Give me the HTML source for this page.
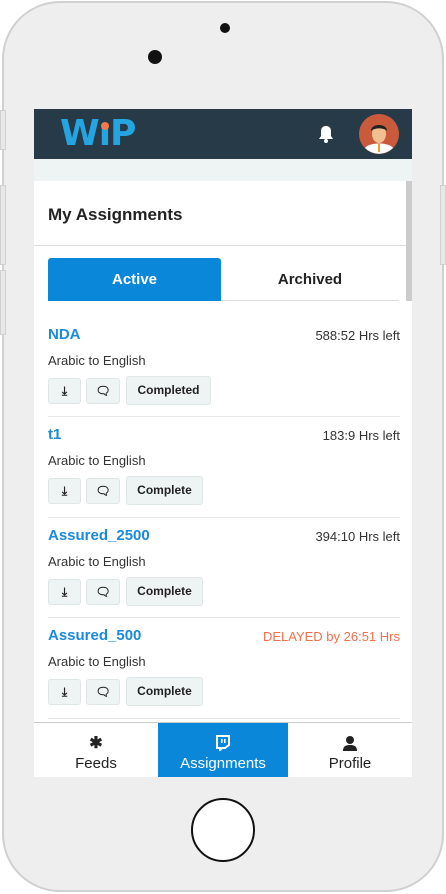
<!DOCTYPE html>
<html><head><style>
*{margin:0;padding:0;box-sizing:border-box}
body{width:446px;height:894px;background:#fff;font-family:"Liberation Sans",sans-serif;position:relative;overflow:hidden}
.phone{position:absolute;left:2px;top:1px;width:442px;height:891px;background:#eeeeee;border:2px solid #d0d0d0;border-radius:58px}
.sb{position:absolute;width:6px;background:#e8e8e8;border:1px solid #d0d0d0}
.screen{position:absolute;left:34px;top:109px;width:378px;height:668px;background:#fff;overflow:hidden}
.hdr{position:absolute;left:0;top:0;width:378px;height:50px;background:#263a48}
.band{position:absolute;left:0;top:50px;width:378px;height:22px;background:#eef3f4}
.title{position:absolute;left:14px;top:96px;font-size:17px;font-weight:bold;color:#222}
.line{position:absolute;height:1px;background:#ddd}
.tab{position:absolute;top:149px;height:43px;font-size:15px;font-weight:bold;text-align:center;line-height:43px}
.item{position:absolute;left:14px;width:352px;height:100px}
.nm{position:absolute;left:0;top:0;font-size:15px;font-weight:bold;color:#1a8adb}
.tm{position:absolute;right:0;top:2px;font-size:13px;color:#333}
.lang{position:absolute;left:0;top:27px;font-size:13px;color:#333}
.b{position:absolute;top:52px;height:26px;background:#eef4f4;border:1px solid #dfe6e6;border-radius:3px;font-size:12px;font-weight:bold;color:#222;text-align:center;line-height:24px}
.b.w{top:50px;height:29px;line-height:27px}
.nav{position:absolute;top:614px;height:54px;font-size:15px;text-align:center;color:#222}
</style></head><body>
<div class="phone"></div>
<div class="sb" style="left:0;top:110px;height:40px"></div>
<div class="sb" style="left:0;top:185px;height:80px"></div>
<div class="sb" style="left:0;top:270px;height:65px"></div>
<div class="sb" style="left:440px;top:185px;height:80px"></div>
<div style="position:absolute;left:220px;top:23px;width:10px;height:10px;border-radius:50%;background:#111"></div>
<div style="position:absolute;left:148px;top:50px;width:14px;height:14px;border-radius:50%;background:#111"></div>
<div style="position:absolute;left:191px;top:798px;width:64px;height:64px;border-radius:50%;border:2px solid #111;background:#fff"></div>
<div class="screen">
<div class="hdr">
<div style="position:absolute;left:26px;top:4px;font-size:36px;font-weight:900;color:#25a4e2;font-family:'DejaVu Sans',sans-serif;letter-spacing:-1px">WıP</div>
<div style="position:absolute;left:67px;top:13px;width:8px;height:8px;border-radius:50%;background:#f07a4a"></div>
<svg style="position:absolute;left:284px;top:16px" width="16" height="18" viewBox="0 0 16 18"><path d="M8 1c-3 0-5 2-5 5v5l-2 3h14l-2-3V6c0-3-2-5-5-5z" fill="#fff"/><circle cx="8" cy="16" r="2" fill="#fff"/></svg>
<svg style="position:absolute;left:325px;top:5px" width="40" height="40" viewBox="0 0 40 40"><circle cx="20" cy="20" r="20" fill="#c95a3c"/><path d="M6 34c4-6 24-6 28 0a20 20 0 0 1-28 0z" fill="#fff"/><rect x="19" y="30" width="2" height="8" fill="#f0a020"/><ellipse cx="20" cy="20" rx="7" ry="9" fill="#f0c090"/><path d="M12 17c0-8 16-8 16 0c-2-3-12-4-16 0z" fill="#222"/></svg>
</div>
<div class="band"></div>
<div style="position:absolute;right:0;top:72px;width:6px;height:120px;background:#ccc"></div>
<div class="title">My Assignments</div>
<div class="line" style="left:0;top:136px;width:372px"></div>
<div class="tab" style="left:14px;width:173px;background:#0a87d8;color:#fff;border-radius:3px 3px 0 0">Active</div>
<div class="tab" style="left:187px;width:178px;color:#222;border-bottom:1px solid #ddd">Archived</div>

<div class="item" style="top:217px"><div class="nm">NDA</div><div class="tm">588:52 Hrs left</div><div class="lang">Arabic to English</div>
<div class="b" style="left:0;width:33px">⤓</div><div class="b" style="left:38px;width:34px">🗨</div><div class="b w" style="left:78px;width:85px">Completed</div></div>
<div class="line" style="left:14px;top:307px;width:352px;background:#e8e8e8"></div>
<div class="item" style="top:317px"><div class="nm">t1</div><div class="tm">183:9 Hrs left</div><div class="lang">Arabic to English</div>
<div class="b" style="left:0;width:33px">⤓</div><div class="b" style="left:38px;width:34px">🗨</div><div class="b w" style="left:78px;width:77px">Complete</div></div>
<div class="line" style="left:14px;top:408px;width:352px;background:#e8e8e8"></div>
<div class="item" style="top:418px"><div class="nm">Assured_2500</div><div class="tm">394:10 Hrs left</div><div class="lang">Arabic to English</div>
<div class="b" style="left:0;width:33px">⤓</div><div class="b" style="left:38px;width:34px">🗨</div><div class="b w" style="left:78px;width:77px">Complete</div></div>
<div class="line" style="left:14px;top:508px;width:352px;background:#e8e8e8"></div>
<div class="item" style="top:518px"><div class="nm">Assured_500</div><div class="tm" style="color:#f0704a">DELAYED by 26:51 Hrs</div><div class="lang">Arabic to English</div>
<div class="b" style="left:0;width:33px">⤓</div><div class="b" style="left:38px;width:34px">🗨</div><div class="b w" style="left:78px;width:77px">Complete</div></div>
<div class="line" style="left:14px;top:609px;width:352px;background:#e8e8e8"></div>
<div class="line" style="left:0;top:613px;width:378px;background:#ccc"></div>
<div class="nav" style="left:0;width:124px"><div style="margin-top:10px;font-size:16px;font-weight:bold">✱</div><div style="margin-top:2px">Feeds</div></div>
<div class="nav" style="left:124px;width:130px;background:#0a87d8;color:#fff"><svg style="margin-top:12px" width="16" height="16" viewBox="0 0 16 16"><path d="M2 1h12v9l-4 3H7l-2 2v-2H2z" fill="none" stroke="#fff" stroke-width="2"/><rect x="6" y="4" width="1.6" height="4" fill="#fff"/><rect x="9" y="4" width="1.6" height="4" fill="#fff"/></svg><div>Assignments</div></div>
<div class="nav" style="left:254px;width:124px"><svg style="margin-top:12px" width="16" height="16" viewBox="0 0 16 16"><circle cx="8" cy="5" r="4" fill="#222"/><path d="M1 16c0-5 3-6 7-6s7 1 7 6z" fill="#222"/></svg><div>Profile</div></div>
</div>
</body></html>
